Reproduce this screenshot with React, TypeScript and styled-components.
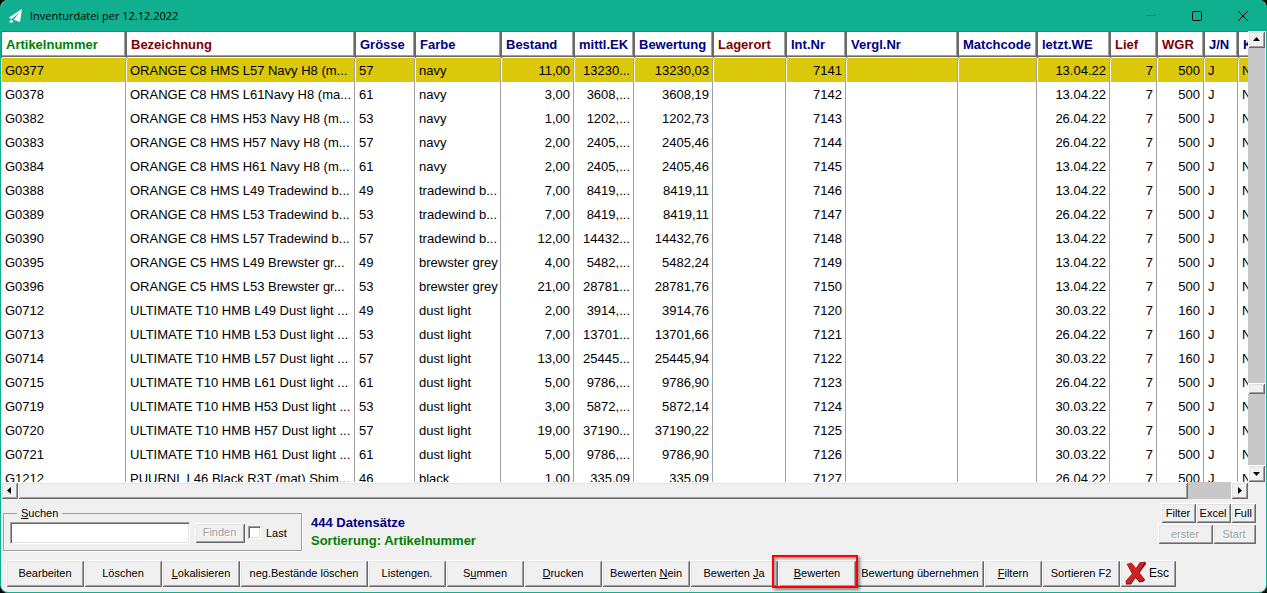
import React from 'react';
import styled, { createGlobalStyle, css } from 'styled-components';

const Global = createGlobalStyle`
  * { box-sizing: border-box; }
  html, body { margin: 0; background: #000; }
  body, button, input { font-family: "Liberation Sans", Arial, sans-serif; }
`;

const raised = css`
  border: 0;
  border-radius: 0;
  background: #f0f0f0;
  box-shadow: inset 1px 1px 0 #fff, inset -1px -1px 0 #696969,
    inset 2px 2px 0 #e3e3e3, inset -2px -2px 0 #a0a0a0;
`;

const Window = styled.div`
  display: flex;
  flex-direction: column;
  height: 100vh;
  overflow: hidden;
  border: 1px solid #10af90;
  border-top: 0;
  border-radius: 8px;
  background: #f0f0f0;
  color: #000;
`;

const TitleBar = styled.header`
  display: flex;
  align-items: center;
  flex: none;
  height: 31px;
  padding: 0 17px 0 7px;
  gap: 8px;
  background: #10af90;
`;

const Title = styled.h1`
  flex: 1;
  margin: 0;
  font: 400 11px/16px "Open Sans", "Noto Sans", sans-serif;
`;

const WindowButtons = styled.div`
  display: flex;
  gap: 34px;
`;

const WindowButton = styled.button`
  display: flex;
  padding: 0;
  border: 0;
  background: none;
`;

const GridArea = styled.main`
  display: grid;
  grid-template-columns: minmax(0, 1fr) 17px;
  grid-template-rows: minmax(0, 1fr) 17px;
  flex: 1;
  min-height: 0;
  padding-right: 1px;
`;

const TableView = styled.div`
  overflow: hidden;
  background: #fff;
`;

const Table = styled.table`
  width: 1297px;
  table-layout: fixed;
  border-collapse: separate;
  border-spacing: 0;
`;

const Col = styled.col<{ $w: number }>`
  width: ${(p) => p.$w}px;
`;

const Th = styled.th<{ $color: string }>`
  height: 27px;
  padding: 0 0 0 5px;
  overflow: hidden;
  white-space: nowrap;
  text-align: left;
  font: 700 13px/16px "Liberation Sans", Arial, sans-serif;
  color: ${(p) => p.$color};
  box-shadow: inset 1px 1px 0 #696969, inset 0 -1px 0 #fff,
    inset -1px -2px 0 #696969, inset -2px -3px 0 #a0a0a0;
`;

const Tr = styled.tr<{ $selected: boolean }>`
  background: ${(p) => (p.$selected ? '#dcc80a' : '#fff')};
`;

const Td = styled.td<{ $right: boolean }>`
  height: 24px;
  padding: 2px 3px 0;
  overflow: hidden;
  white-space: nowrap;
  text-align: ${(p) => (p.$right ? 'right' : 'left')};
  font-size: 13px;
  line-height: 16px;
  border-left: 1px solid #fff;
  border-right: 1px solid #a0a0a0;
`;

const ScrollBar = styled.div<{ $vertical?: boolean }>`
  display: flex;
  flex-direction: ${(p) => (p.$vertical ? 'column' : 'row')};
  background: #c8c8c8;
`;

const ScrollButton = styled.button`
  ${raised}
  display: flex;
  flex: none;
  align-items: center;
  justify-content: center;
  width: 17px;
  height: 17px;
  padding: 0;
`;

const Track = styled.div<{ $grow: number }>`
  flex: ${(p) => p.$grow} 0 0;
`;

const Thumb = styled.div<{ $grow: number }>`
  ${raised}
  flex: ${(p) => p.$grow} 0 0;
`;

const Panel = styled.section`
  display: flex;
  align-items: flex-start;
  flex: none;
  height: 61px;
  padding: 4px 10px 0 2px;
`;

const SearchBox = styled.fieldset`
  display: flex;
  align-items: center;
  width: 299px;
  height: 44px;
  margin: 4px 9px 0 0;
  padding: 0 6px 5px;
  border: 1px solid #a0a0a0;
  box-shadow: 1px 1px 0 #fff;
`;

const Legend = styled.legend`
  margin-left: 7px;
  padding: 0 4px;
  font-size: 11px;
  line-height: 13px;
`;

const SearchInput = styled.input`
  width: 180px;
  height: 22px;
  padding: 2px 4px;
  border: 1px solid;
  border-color: #a0a0a0 #fff #fff #a0a0a0;
  background: #fff;
  box-shadow: inset 1px 1px 0 #696969, inset -1px -1px 0 #e3e3e3;
  font-size: 12px;
`;

const SmallButton = styled.button<{ $w: number }>`
  ${raised}
  width: ${(p) => p.$w}px;
  height: 20px;
  padding: 0 1px 1px 0;
  font-size: 11px;
  line-height: 14px;
  color: #000;
  &:disabled {
    color: #a0a0a0;
    text-shadow: 1px 1px 0 #fff;
  }
`;

const FindButton = styled(SmallButton)`
  margin: 0 3px 0 5px;
`;

const CheckLabel = styled.label`
  display: flex;
  align-items: center;
  gap: 5px;
  font-size: 11px;
  line-height: 14px;
`;

const Check = styled.input`
  appearance: none;
  width: 13px;
  height: 13px;
  margin: 0;
  border: 1px solid;
  border-color: #a0a0a0 #fff #fff #a0a0a0;
  background: #fff;
  box-shadow: inset 1px 1px 0 #696969, inset -1px -1px 0 #e3e3e3;
`;

const Info = styled.div`
  flex: 1;
  padding-top: 11px;
`;

const InfoLine = styled.p<{ $color: string }>`
  margin: 0;
  font-size: 13px;
  font-weight: 700;
  line-height: 18px;
  color: ${(p) => p.$color};
`;

const SideButtons = styled.div`
  display: flex;
  flex-direction: column;
  align-items: flex-end;
  gap: 1px;
`;

const ButtonRow = styled.div`
  display: flex;
`;

const Footer = styled.footer`
  display: flex;
  flex: none;
  height: 32px;
  padding-left: 5px;
`;

const ActionButton = styled.button<{ $w: number }>`
  ${raised}
  position: relative;
  display: flex;
  align-items: center;
  justify-content: center;
  flex: none;
  width: ${(p) => p.$w}px;
  height: 27px;
  padding: 0 0 1px;
  white-space: nowrap;
  font-size: 11px;
  line-height: 14px;
  color: #000;
`;

const EscButton = styled(ActionButton)`
  gap: 2px;
  padding-right: 2px;
  font-size: 12px;
`;

const Marker = styled.span`
  position: absolute;
  z-index: 1;
  inset: -5px -2px -1px -6px;
  border: 2px solid #f00;
  box-shadow: 2px 2px 3px rgba(0, 0, 0, 0.45), inset 2px 2px 3px rgba(0, 0, 0, 0.35);
`;

const GREEN = '#008000';
const MAROON = '#800000';
const NAVY = '#000080';

type Column = { name: string; width: number; color: string; right?: boolean };

const columns: Column[] = [
  { name: 'Artikelnummer', width: 125, color: GREEN },
  { name: 'Bezeichnung', width: 229, color: MAROON },
  { name: 'Grösse', width: 60, color: NAVY },
  { name: 'Farbe', width: 86, color: NAVY },
  { name: 'Bestand', width: 73, color: NAVY, right: true },
  { name: 'mittl.EK', width: 60, color: NAVY, right: true },
  { name: 'Bewertung', width: 79, color: NAVY, right: true },
  { name: 'Lagerort', width: 73, color: MAROON },
  { name: 'Int.Nr', width: 60, color: NAVY, right: true },
  { name: 'Vergl.Nr', width: 112, color: NAVY },
  { name: 'Matchcode', width: 79, color: NAVY },
  { name: 'letzt.WE', width: 73, color: NAVY, right: true },
  { name: 'Lief', width: 47, color: MAROON, right: true },
  { name: 'WGR', width: 47, color: MAROON, right: true },
  { name: 'J/N', width: 34, color: NAVY },
  { name: 'K', width: 60, color: NAVY },
];

const records = [
  ['G0377', 'ORANGE C8 HMS L57 Navy H8 (m...', '57', 'navy', '11,00', '13230...', '13230,03', '7141', '13.04.22', '500'],
  ['G0378', 'ORANGE C8 HMS L61Navy H8 (ma...', '61', 'navy', '3,00', '3608,...', '3608,19', '7142', '13.04.22', '500'],
  ['G0382', 'ORANGE C8 HMS H53 Navy H8 (m...', '53', 'navy', '1,00', '1202,...', '1202,73', '7143', '26.04.22', '500'],
  ['G0383', 'ORANGE C8 HMS H57 Navy H8 (m...', '57', 'navy', '2,00', '2405,...', '2405,46', '7144', '26.04.22', '500'],
  ['G0384', 'ORANGE C8 HMS H61 Navy H8 (m...', '61', 'navy', '2,00', '2405,...', '2405,46', '7145', '13.04.22', '500'],
  ['G0388', 'ORANGE C8 HMS L49 Tradewind b...', '49', 'tradewind b...', '7,00', '8419,...', '8419,11', '7146', '13.04.22', '500'],
  ['G0389', 'ORANGE C8 HMS L53 Tradewind b...', '53', 'tradewind b...', '7,00', '8419,...', '8419,11', '7147', '26.04.22', '500'],
  ['G0390', 'ORANGE C8 HMS L57 Tradewind b...', '57', 'tradewind b...', '12,00', '14432...', '14432,76', '7148', '13.04.22', '500'],
  ['G0395', 'ORANGE C5 HMS L49 Brewster gr...', '49', 'brewster grey', '4,00', '5482,...', '5482,24', '7149', '13.04.22', '500'],
  ['G0396', 'ORANGE C5 HMS L53 Brewster gr...', '53', 'brewster grey', '21,00', '28781...', '28781,76', '7150', '13.04.22', '500'],
  ['G0712', 'ULTIMATE T10 HMB L49 Dust light ...', '49', 'dust light', '2,00', '3914,...', '3914,76', '7120', '30.03.22', '160'],
  ['G0713', 'ULTIMATE T10 HMB L53 Dust light ...', '53', 'dust light', '7,00', '13701...', '13701,66', '7121', '26.04.22', '160'],
  ['G0714', 'ULTIMATE T10 HMB L57 Dust light ...', '57', 'dust light', '13,00', '25445...', '25445,94', '7122', '30.03.22', '160'],
  ['G0715', 'ULTIMATE T10 HMB L61 Dust light ...', '61', 'dust light', '5,00', '9786,...', '9786,90', '7123', '26.04.22', '500'],
  ['G0719', 'ULTIMATE T10 HMB H53 Dust light ...', '53', 'dust light', '3,00', '5872,...', '5872,14', '7124', '30.03.22', '500'],
  ['G0720', 'ULTIMATE T10 HMB H57 Dust light ...', '57', 'dust light', '19,00', '37190...', '37190,22', '7125', '30.03.22', '500'],
  ['G0721', 'ULTIMATE T10 HMB H61 Dust light ...', '61', 'dust light', '5,00', '9786,...', '9786,90', '7126', '30.03.22', '500'],
  ['G1212', 'PUURNL L46 Black R3T (mat) Shim...', '46', 'black', '1,00', '335,09', '335,09', '7127', '26.04.22', '500'],
];

const toCells = (r: string[]) => [
  ...r.slice(0, 7), '', r[7], '', '', r[8], '7', r[9], 'J', 'N',
];

type Action = { pre?: string; key?: string; post: string; width: number; marked?: boolean };

const actions: Action[] = [
  { post: 'Bearbeiten', width: 78 },
  { post: 'Löschen', width: 78 },
  { key: 'L', post: 'okalisieren', width: 78 },
  { post: 'neg.Bestände löschen', width: 128 },
  { pre: 'Listen', key: 'g', post: 'en.', width: 78 },
  { pre: 'S', key: 'u', post: 'mmen', width: 78 },
  { key: 'D', post: 'rucken', width: 78 },
  { pre: 'Bewerten ', key: 'N', post: 'ein', width: 88 },
  { pre: 'Bewerten ', key: 'J', post: 'a', width: 88 },
  { key: 'B', post: 'ewerten', width: 78, marked: true },
  { post: 'Bewertung übernehmen', width: 128 },
  { key: 'F', post: 'iltern', width: 58 },
  { post: 'Sortieren F2', width: 78 },
];

const arrows = {
  up: 'M0 5h7L3.5 1z',
  down: 'M0 2h7L3.5 6z',
  left: 'M5 0v7L1 3.5z',
  right: 'M2 0v7l4-3.5z',
};

const Arrow = ({ dir }: { dir: keyof typeof arrows }) => (
  <svg width="7" height="7" viewBox="0 0 7 7" aria-hidden="true">
    <path d={arrows[dir]} />
  </svg>
);

export default function App() {
  return (
    <>
      <Global />
      <Window>
        <TitleBar>
          <svg width="14" height="14" viewBox="0 0 14 14" aria-hidden="true">
            <path d="M14 0L1 8.5l2.500 1.700L11.500 3.500 5.600 10.800 12 13z" fill="#fff" />
            <path d="M1 13.600l2-3 1.800 1.200.4 1.800z" fill="#fff" />
          </svg>
          <Title>Inventurdatei per 12.12.2022</Title>
          <WindowButtons>
            <WindowButton aria-label="Minimieren">
              <svg width="12" height="12" viewBox="0 0 12 12"><path d="M1 5.5h10" stroke="#0b8d75" /></svg>
            </WindowButton>
            <WindowButton aria-label="Maximieren">
              <svg width="12" height="12" viewBox="0 0 12 12"><rect x="1.5" y="1.5" width="9" height="9" rx="1" fill="none" stroke="#000" /></svg>
            </WindowButton>
            <WindowButton aria-label="Schliessen">
              <svg width="12" height="12" viewBox="0 0 12 12"><path d="M1 1l10 10M11 1L1 11" stroke="#000" /></svg>
            </WindowButton>
          </WindowButtons>
        </TitleBar>

        <GridArea>
          <TableView>
            <Table>
              <colgroup>
                {columns.map((c) => <Col key={c.name} $w={c.width} />)}
              </colgroup>
              <thead>
                <tr>
                  {columns.map((c) => <Th key={c.name} scope="col" $color={c.color}>{c.name}</Th>)}
                </tr>
              </thead>
              <tbody>
                {records.map((r, i) => (
                  <Tr key={r[0]} $selected={i === 0}>
                    {toCells(r).map((text, j) => (
                      <Td key={columns[j].name} $right={!!columns[j].right}>{text}</Td>
                    ))}
                  </Tr>
                ))}
              </tbody>
            </Table>
          </TableView>
          <ScrollBar $vertical>
            <ScrollButton aria-label="Nach oben"><Arrow dir="up" /></ScrollButton>
            <Track $grow={335} />
            <Thumb $grow={11} />
            <Track $grow={71} />
            <ScrollButton aria-label="Nach unten"><Arrow dir="down" /></ScrollButton>
          </ScrollBar>
          <ScrollBar>
            <ScrollButton aria-label="Nach links"><Arrow dir="left" /></ScrollButton>
            <Thumb $grow={1171} />
            <Track $grow={43} />
            <ScrollButton aria-label="Nach rechts"><Arrow dir="right" /></ScrollButton>
          </ScrollBar>
        </GridArea>

        <Panel>
          <SearchBox>
            <Legend><u>S</u>uchen</Legend>
            <SearchInput type="text" aria-label="Suchen" />
            <FindButton $w={50} disabled>Finden</FindButton>
            <CheckLabel><Check type="checkbox" />Last</CheckLabel>
          </SearchBox>
          <Info>
            <InfoLine $color={NAVY}>444 Datensätze</InfoLine>
            <InfoLine $color={GREEN}>Sortierung: Artikelnummer</InfoLine>
          </Info>
          <SideButtons>
            <ButtonRow>
              <SmallButton $w={35}>Filter</SmallButton>
              <SmallButton $w={35}>Excel</SmallButton>
              <SmallButton $w={25}>Full</SmallButton>
            </ButtonRow>
            <ButtonRow>
              <SmallButton $w={55} disabled>erster</SmallButton>
              <SmallButton $w={43} disabled>Start</SmallButton>
            </ButtonRow>
          </SideButtons>
        </Panel>

        <Footer>
          {actions.map((a) => (
            <ActionButton key={`${a.pre ?? ''}${a.key ?? ''}${a.post}`} $w={a.width}>
              <span>{a.pre}{a.key && <u>{a.key}</u>}{a.post}</span>
              {a.marked && <Marker />}
            </ActionButton>
          ))}
          <EscButton $w={56}>
            <svg width="22" height="24" viewBox="0 0 22 24" aria-hidden="true">
              <path d="M2 3.500L6.500 2.500 10.500 8 15 1.500 20.500 1 21 3 14.500 12 20 18.500 19 20.500 14.500 21.500 10.500 17 6 23.500 1 23.500 .5 20 7 13z" fill="#7a1414" />
              <path d="M1.500 3L6.500 1.500 11 7 14.500 1.500 20 .5 14 11 19.500 18.500 14.500 20.500 10.500 15.500 6 22 1 22.500 1 20 7.500 12z" fill="#cc2222" />
            </svg>
            Esc
          </EscButton>
        </Footer>
      </Window>
    </>
  );
}
